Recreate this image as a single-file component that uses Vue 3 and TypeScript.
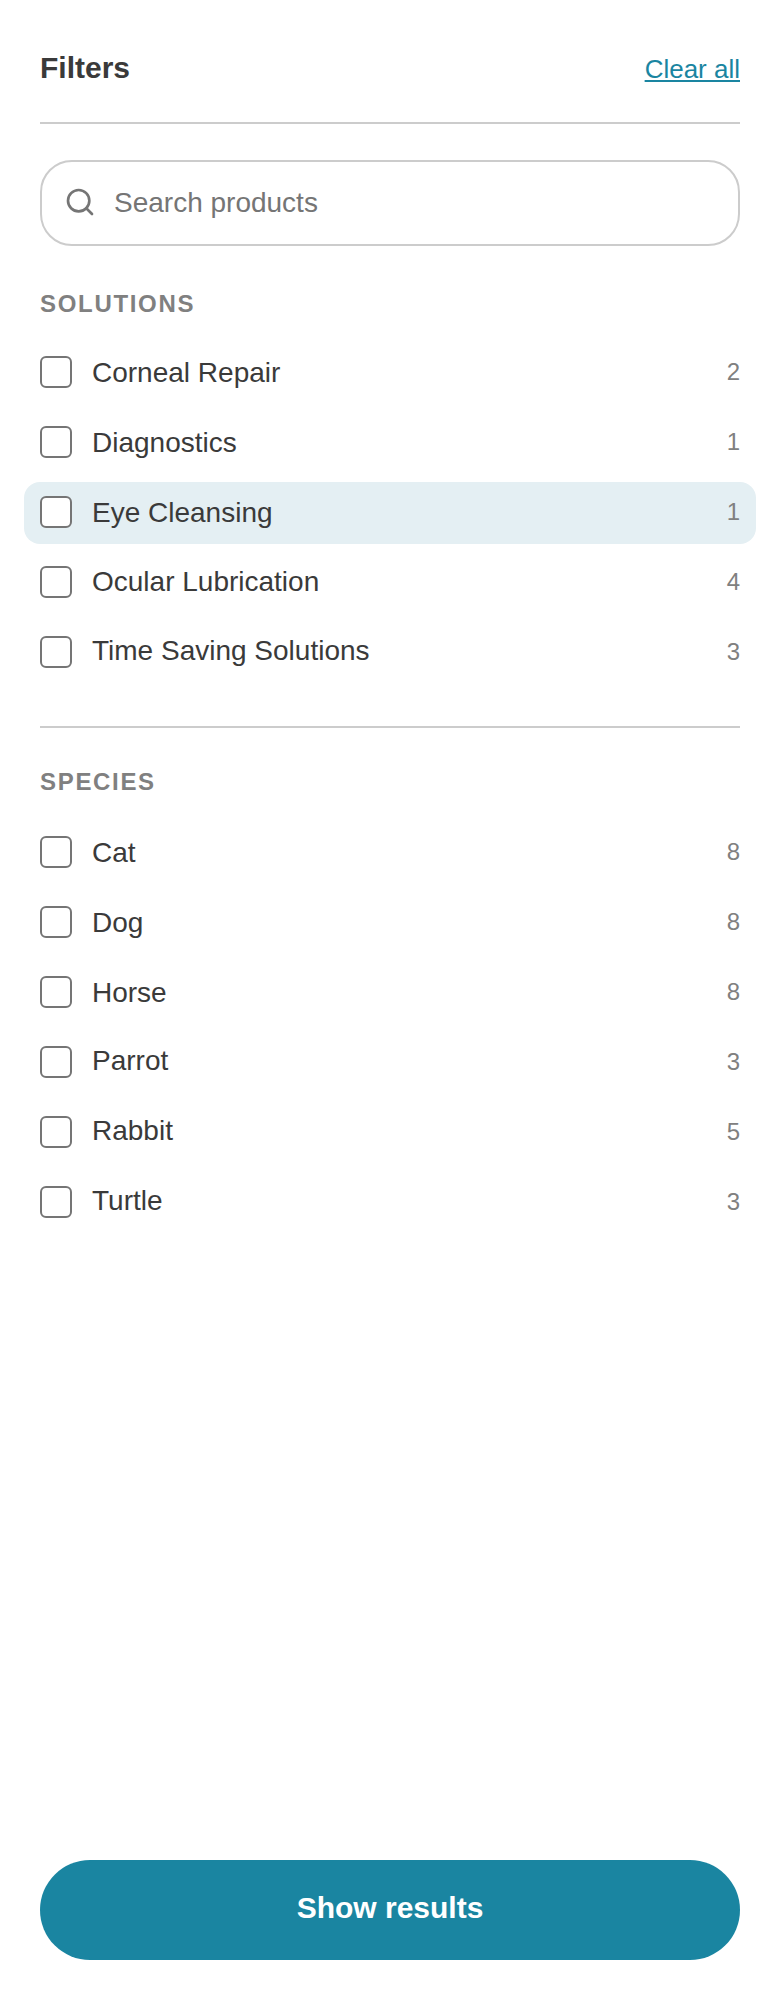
<script setup lang="ts">
interface Facet { label: string; count: number; active?: boolean; lift?: boolean; nudge?: boolean }
const solutions: Facet[] = [
  { label: 'Corneal Repair', count: 2 },
  { label: 'Diagnostics', count: 1 },
  { label: 'Eye Cleansing', count: 1, active: true },
  { label: 'Ocular Lubrication', count: 4, nudge: true },
  { label: 'Time Saving Solutions', count: 3, lift: true },
]
const species: Facet[] = [
  { label: 'Cat', count: 8 },
  { label: 'Dog', count: 8 },
  { label: 'Horse', count: 8 },
  { label: 'Parrot', count: 3, lift: true },
  { label: 'Rabbit', count: 5, lift: true },
  { label: 'Turtle', count: 3, lift: true },
]
const groups = [
  { title: 'SOLUTIONS', items: solutions },
  { title: 'SPECIES', items: species },
]
</script>

<template>
  <div class="panel">
    <header class="head">
      <h2 class="title">Filters</h2>
      <a class="clear">Clear all</a>
    </header>
    <div class="search">
      <svg class="search-icon" viewBox="0 0 24 24" fill="none" stroke="#757575" stroke-width="2" stroke-linecap="round">
        <circle cx="11" cy="11" r="8" />
        <path d="M21 21l-4.3-4.3" />
      </svg>
      <span class="placeholder">Search products</span>
    </div>
    <section v-for="g in groups" :key="g.title" class="group">
      <h3 class="group-title">{{ g.title }}</h3>
      <ul class="list">
        <li v-for="it in g.items" :key="it.label" class="row" :class="{ active: it.active }">
          <span class="box"></span>
          <span class="label" :class="{ lift: it.lift, nudge: it.nudge }">{{ it.label }}</span>
          <span class="count">{{ it.count }}</span>
        </li>
      </ul>
    </section>
    <div class="foot">
      <button class="show">Show results</button>
    </div>
  </div>
</template>

<style>
html, body { margin: 0; background: #fff; }
</style>

<style scoped>
.panel {
  box-sizing: border-box;
  width: 780px;
  height: 2000px;
  padding: 0 40px;
  display: flex;
  flex-direction: column;
  font-family: "Liberation Sans", Arial, sans-serif;
  color: #3a3a3a;
}
.head {
  display: flex;
  justify-content: space-between;
  align-items: center;
  padding: 49px 0 35px;
  border-bottom: 2px solid #ccc;
}
.title { margin: 0; font-size: 30px; line-height: 38px; font-weight: 700; color: #3a3a3a; }
.clear { margin-top: 2px; font-size: 26px; line-height: 36px; color: #1a85a1; text-decoration: underline; }
.search {
  box-sizing: border-box;
  height: 86px;
  margin-top: 36px;
  padding: 0 22px;
  display: flex;
  align-items: center;
  gap: 18px;
  border: 2px solid #ccc;
  border-radius: 32px;
}
.search-icon { width: 32px; height: 32px; flex: none; margin-bottom: 2px; }
.placeholder { font-size: 28px; color: #757575; margin-bottom: 1px; }
.group + .group { border-top: 2px solid #ccc; margin-top: 42px; }
.group-title {
  margin: 43px 0 23px;
  font-size: 24px;
  line-height: 30px;
  font-weight: 700;
  letter-spacing: 1.68px;
  color: #808080;
}
.group + .group .group-title { margin: 39px 0 25px; }
.list { list-style: none; margin: 0; padding: 0; display: flex; flex-direction: column; gap: 8px; }
.row {
  height: 62px;
  margin: 0 -16px;
  padding: 0 16px;
  display: flex;
  align-items: center;
  border-radius: 16px;
}
.row.active { background: #e4eff3; }
.box {
  box-sizing: border-box;
  width: 32px;
  height: 32px;
  flex: none;
  margin: 0 20px 2px 0;
  border: 2px solid #757575;
  border-radius: 6px;
  background: #fff;
}
.label { flex: 1; font-size: 28px; color: #3a3a3a; }
.label.nudge { margin-bottom: 2px; }
.label.lift { margin-bottom: 4px; }
.count { font-size: 24px; color: #808080; margin-bottom: 2px; }
.foot { margin-top: auto; padding-bottom: 40px; }
.show {
  display: block;
  width: 100%;
  height: 100px;
  padding: 0 0 4px;
  border: 0;
  border-radius: 50px;
  background: #1a85a1;
  color: #fff;
  font-family: inherit;
  font-size: 30px;
  font-weight: 700;
}
</style>
